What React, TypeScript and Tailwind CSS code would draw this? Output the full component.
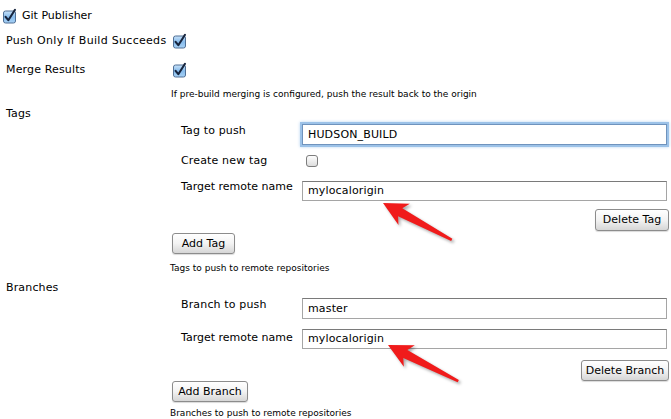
import React from "react";

function Checkbox({ checked }: { checked: boolean }) {
  if (!checked) {
    return (
      <svg width="14" height="14" viewBox="0 0 14 14" className="block">
        <defs>
          <linearGradient id="uc" x1="0" y1="0" x2="0" y2="1">
            <stop offset="0" stopColor="#ffffff" />
            <stop offset="1" stopColor="#dcdcdc" />
          </linearGradient>
        </defs>
        <rect x="1.5" y="1.5" width="11" height="11" rx="2.5" fill="url(#uc)" stroke="#7d7d7d" />
      </svg>
    );
  }
  return (
    <svg width="14" height="14" viewBox="0 0 14 14" className="block overflow-visible">
      <defs>
        <linearGradient id="ck" x1="0" y1="0" x2="0" y2="1">
          <stop offset="0" stopColor="#c9e2f8" />
          <stop offset="0.5" stopColor="#86bbec" />
          <stop offset="1" stopColor="#a8d2f6" />
        </linearGradient>
      </defs>
      <rect x="0.5" y="2" width="12" height="12" rx="2" fill="url(#ck)" stroke="#4f6f95" />
      <path d="M2.6 7.8 L5.3 11.2 L12 0.8" fill="none" stroke="#16243d" strokeWidth="2.1" strokeLinecap="round" strokeLinejoin="round" />
    </svg>
  );
}

function Button({ children, className = "" }: { children: React.ReactNode; className?: string }) {
  return (
    <div
      className={
        "flex items-center justify-center rounded-[3px] border border-[#8c8c8c] bg-linear-to-b from-white via-[#f3f3f3] to-[#d6d6d6] text-[11px] tracking-normal text-black shadow-[0_1px_1px_rgba(0,0,0,0.15)] " +
        className
      }
    >
      {children}
    </div>
  );
}

function TextBox({ value, focused = false, h = "h-[20px]" }: { value: string; focused?: boolean; h?: string }) {
  return (
    <div
      className={
        "flex w-[365px] items-center border pl-[5px] text-[11px] " +
        h +
        (focused
          ? " border-[#6f93bd] shadow-[0_0_0_2px_#9cc2e8,0_0_3px_2px_#b8d5f2]"
          : " border-[#a5a5a5] border-t-[#7a7a7a]")
      }
    >
      {value}
    </div>
  );
}

function Arrow({ x, y, angle, len }: { x: number; y: number; angle: number; len: number }) {
  return (
    <g transform={`translate(${x} ${y}) rotate(${angle})`}>
      <polygon
        points={`0,0 24,-12 19.5,-4.5 ${len},-1.3 ${len},1.3 19.5,4.5 24,12`}
        fill="#f01b1b"
      />
    </g>
  );
}

export default function App() {
  return (
    <div className="relative h-[419px] w-[671px] overflow-hidden bg-white text-[11px] leading-[12px] tracking-[0.15px] text-black [font-family:'DejaVu_Sans',Verdana,sans-serif]">
      <div className="mt-[7px] flex h-[18px] items-center gap-[5px] pl-[3px]">
        <Checkbox checked />
        <span className="tracking-normal">Git Publisher</span>
      </div>

      <div className="mt-[7px] flex h-[18px] items-center pl-[6px]">
        <span className="w-[167px] tracking-[0.3px]">Push Only If Build Succeeds</span>
        <Checkbox checked />
      </div>

      <div className="mt-[11px] flex h-[18px] items-center pl-[6px]">
        <span className="w-[167px]">Merge Results</span>
        <Checkbox checked />
      </div>

      <div className="mt-[9px] h-[12px] pl-[171px] text-[9px] leading-[12px] tracking-normal">
        If pre-build merging is configured, push the result back to the origin
      </div>

      <div className="mt-[6px] flex h-[16px] items-center pl-[6px]">Tags</div>

      <div className="mt-[2px] flex h-[21px] items-start">
        <span className="mt-[1px] w-[302px] pl-[181px]">Tag to push</span>
        <TextBox value="HUDSON_BUILD" focused h="h-[21px]" />
      </div>

      <div className="mt-[8px] flex h-[16px] items-center">
        <span className="w-[305px] pl-[181px]">Create new tag</span>
        <Checkbox checked={false} />
      </div>

      <div className="mt-[12px] flex h-[20px] items-start">
        <span className="w-[302px] pl-[181px] tracking-normal">Target remote name</span>
        <TextBox value="mylocalorigin" />
      </div>

      <div className="mt-[8px] flex justify-end pr-[2px]">
        <Button className="h-[22px] w-[74px]">Delete Tag</Button>
      </div>

      <div className="mt-[2px] flex pl-[172px]">
        <Button className="h-[21px] w-[63px]">Add Tag</Button>
      </div>

      <div className="mt-[8px] h-[12px] pl-[170px] text-[9px] leading-[12px] tracking-normal">
        Tags to push to remote repositories
      </div>

      <div className="mt-[6px] flex h-[16px] items-center pl-[6px]">Branches</div>

      <div className="mt-[2px] flex h-[21px] items-start">
        <span className="mt-[1px] w-[302px] pl-[181px]">Branch to push</span>
        <TextBox value="master" h="h-[21px]" />
      </div>

      <div className="mt-[10px] flex h-[20px] items-start">
        <span className="mt-[3px] w-[302px] pl-[181px] tracking-normal">Target remote name</span>
        <TextBox value="mylocalorigin" />
      </div>

      <div className="mt-[11px] flex justify-end pr-[2px]">
        <Button className="h-[21px] w-[88px]">Delete Branch</Button>
      </div>

      <div className="flex pl-[172px]">
        <Button className="h-[21px] w-[76px]">Add Branch</Button>
      </div>

      <div className="mt-[5px] h-[12px] pl-[170px] text-[9px] leading-[12px] tracking-normal">
        Branches to push to remote repositories
      </div>

      <svg
        className="pointer-events-none absolute left-0 top-0 drop-shadow-[2px_2px_1.5px_rgba(0,0,0,0.35)]"
        width="671"
        height="419"
      >
        <Arrow x={383} y={203} angle={28.2} len={78} />
        <Arrow x={388} y={345} angle={27.2} len={79} />
      </svg>
    </div>
  );
}
